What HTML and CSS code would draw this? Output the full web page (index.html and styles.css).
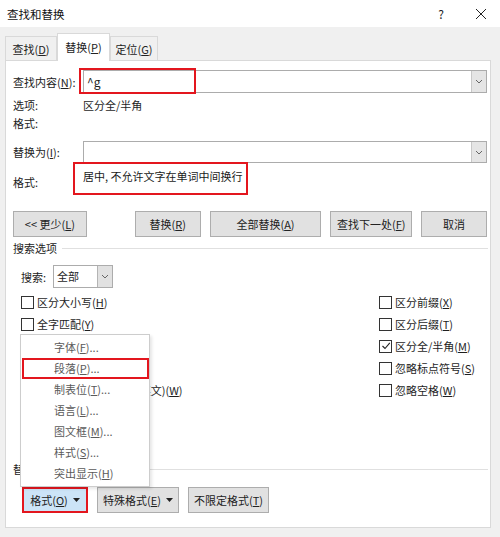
FILE: index.html
```html
<!DOCTYPE html>
<html lang="zh-CN">
<head>
<meta charset="utf-8">
<title>查找和替换</title>
<link rel="stylesheet" href="styles.css">
</head>
<body>
<div class="titlebar">
  <span class="title">查找和替换</span>
  <span class="help">?</span>
  <span class="close"><svg width="12" height="12" viewBox="0 0 12 12"><path d="M1 1L11 11M11 1L1 11" stroke="#222" stroke-width="1" fill="none"/></svg></span>
</div>
<div class="tabs">
  <div class="tab tab-find">查找(<u>D</u>)</div>
  <div class="tab tab-replace active">替换(<u>P</u>)</div>
  <div class="tab tab-goto">定位(<u>G</u>)</div>
</div>
<div class="panel">
  <div class="field find-field">
    <span class="lbl">查找内容(<u>N</u>):</span>
    <div class="combo">
      <span class="combo-text">^g</span>
      <span class="combo-btn"><svg width="8" height="5" viewBox="0 0 8 5"><path d="M1 1L4 4L7 1" stroke="#666" stroke-width="1" fill="none"/></svg></span>
    </div>
    <div class="mark mark-find"></div>
  </div>
  <div class="info first"><span class="lbl">选项:</span><span class="val">区分全/半角</span></div>
  <div class="info"><span class="lbl">格式:</span></div>
  <div class="field replace-field">
    <span class="lbl">替换为(<u>I</u>):</span>
    <div class="combo">
      <span class="combo-text"></span>
      <span class="combo-btn"><svg width="8" height="5" viewBox="0 0 8 5"><path d="M1 1L4 4L7 1" stroke="#666" stroke-width="1" fill="none"/></svg></span>
    </div>
  </div>
  <div class="format-row">
    <span class="lbl">格式:</span>
    <span class="fmt-val">居中, 不允许文字在单词中间换行</span>
    <div class="mark mark-format"></div>
  </div>
  <div class="btn-row">
    <div class="btn btn-less">&lt;&lt; 更少(<u>L</u>)</div>
    <div class="btn btn-replace">替换(<u>R</u>)</div>
    <div class="btn btn-all">全部替换(<u>A</u>)</div>
    <div class="btn btn-next">查找下一处(<u>F</u>)</div>
    <div class="btn btn-cancel">取消</div>
  </div>
  <div class="group-head">搜索选项</div>
  <div class="search-row">
    <span class="lbl">搜索:</span>
    <div class="select">
      <span class="select-text">全部</span>
      <span class="select-btn"><svg width="8" height="5" viewBox="0 0 8 5"><path d="M1 1L4 4L7 1" stroke="#666" stroke-width="1" fill="none"/></svg></span>
    </div>
  </div>
  <div class="checks">
    <div class="chk"><span class="box"></span>区分大小写(<u>H</u>)</div>
    <div class="chk"><span class="box"></span>全字匹配(<u>Y</u>)</div>
    <div class="chk covered"><span class="box"></span>使用通配符(<u>U</u>)</div>
    <div class="chk covered"><span class="box"></span>同音(英文)(<u>K</u>)</div>
    <div class="chk"><span class="box"></span>查找单词的所有形式(英文)(<u>W</u>)</div>
    <div class="chk"><span class="box"></span>区分前缀(<u>X</u>)</div>
    <div class="chk"><span class="box"></span>区分后缀(<u>T</u>)</div>
    <div class="chk"><span class="box"><svg width="10" height="10" viewBox="0 0 10 10"><path d="M1.5 5L4 7.5L8.8 1.8" stroke="#222" stroke-width="1.1" fill="none"/></svg></span>区分全/半角(<u>M</u>)</div>
    <div class="chk"><span class="box"></span>忽略标点符号(<u>S</u>)</div>
    <div class="chk"><span class="box"></span>忽略空格(<u>W</u>)</div>
  </div>
  <div class="group-head repl-head">替换</div>
  <div class="bottom-btns">
    <div class="btn btn-format marked">格式(<u>O</u>)<svg class="tri" width="7" height="4" viewBox="0 0 7 4"><path d="M0 0H7L3.5 4Z" fill="#222"/></svg></div>
    <div class="btn btn-special">特殊格式(<u>E</u>)<svg class="tri" width="7" height="4" viewBox="0 0 7 4"><path d="M0 0H7L3.5 4Z" fill="#222"/></svg></div>
    <div class="btn btn-noformat">不限定格式(<u>T</u>)</div>
  </div>
</div>
<div class="menu">
  <div class="menu-item">字体(<u>F</u>)...</div>
  <div class="menu-item marked">段落(<u>P</u>)...</div>
  <div class="menu-item">制表位(<u>T</u>)...</div>
  <div class="menu-item">语言(<u>L</u>)...</div>
  <div class="menu-item">图文框(<u>M</u>)...</div>
  <div class="menu-item">样式(<u>S</u>)...</div>
  <div class="menu-item">突出显示(<u>H</u>)</div>
</div>
</body>
</html>
```
FILE: styles.css
```css
* { box-sizing: border-box; }
html, body { margin: 0; padding: 0; }
body {
  width: 500px;
  height: 537px;
  background: #f0f0f0;
  font-family: "Noto Sans CJK SC", "Noto Sans", sans-serif;
  font-size: 11px;
  line-height: 16px;
  color: #1e1e1e;
  overflow: hidden;
  position: relative;
}
u { text-decoration: underline; text-underline-offset: 1px; text-decoration-thickness: 1px; }

.titlebar {
  height: 27px;
  background: #fff;
  display: flex;
  align-items: center;
  padding-left: 7px;
}
.title { flex: 1; font-size: 11.5px; color: #111; }
.help { width: 12px; margin-right: 28px; text-align: center; font-size: 12px; color: #222; }
.close { width: 12px; height: 12px; margin-right: 13px; display: flex; }

.tabs {
  display: flex;
  align-items: flex-end;
  height: 33px;
  padding-left: 5px;
  position: relative;
  z-index: 1;
}
.tab {
  height: 24px;
  border: 1px solid #d9d9d9;
  border-bottom: none;
  background: #f0f0f0;
  display: flex;
  align-items: center;
  justify-content: center;
  color: #222;
}
.tab-find { width: 52px; }
.tab-replace { width: 53px; }
.tab-goto { width: 48px; }
.tab.active {
  height: 28px;
  background: #fff;
  margin-bottom: -1px;
  padding-bottom: 2px;
}

.panel {
  position: relative;
  margin-left: 5px;
  width: 486px;
  height: 468px;
  background: #fff;
  border: 1px solid #d9d9d9;
  padding: 9px 3px 0 7px;
}

.lbl { color: #222; }
.field {
  display: flex;
  align-items: center;
  height: 23px;
  position: relative;
}
.field .lbl { width: 70px; flex: none; }
.replace-field { margin-top: 9px; height: 22px; }
.combo {
  flex: 1;
  height: 100%;
  border: 1px solid #acacac;
  display: flex;
  align-items: center;
  background: #fff;
}
.combo-text { flex: 1; padding-left: 3px; font-size: 12px; }
.combo-btn {
  width: 15px;
  height: 100%;
  background: #e5e5e5;
  border-left: 1px solid #c8c8c8;
  display: flex;
  align-items: center;
  justify-content: center;
}

.mark {
  position: absolute;
  border: 2px solid #e3161e;
  pointer-events: none;
}
.mark-find { left: 66px; top: -2px; width: 117px; height: 26px; }
.mark-format { left: 60px; top: -1px; width: 175px; height: 33px; }

.info { display: flex; align-items: center; height: 18px; }
.info.first { margin-top: 3px; }
.info .lbl { width: 70px; flex: none; }

.format-row {
  display: flex;
  align-items: flex-start;
  height: 48px;
  position: relative;
}
.format-row .lbl { width: 70px; flex: none; margin-top: 11px; }
.fmt-val { margin-top: 5px; color: #1a1a1a; }

.btn-row { display: flex; gap: 9px; height: 26px; }
.btn {
  height: 26px;
  background: #e1e1e1;
  border: 1px solid #adadad;
  display: flex;
  align-items: center;
  justify-content: center;
  color: #222;
  white-space: nowrap;
}
.btn-less { width: 74px; margin-right: 39px; }
.btn-replace { width: 66px; }
.btn-all { width: 112px; }
.btn-next { width: 82px; }
.btn-cancel { width: 66px; }

.group-head {
  display: flex;
  align-items: center;
  height: 16px;
  margin-top: 3px;
  color: #222;
}
.group-head::after {
  content: "";
  flex: 1;
  border-top: 1px solid #e0e0e0;
  margin-left: 5px;
  margin-right: -1px;
}
.repl-head { margin-top: 60px; }

.search-row {
  display: flex;
  align-items: center;
  height: 23px;
  margin-top: 9px;
  padding-left: 8px;
}
.search-row .lbl { width: 32px; flex: none; }
.select {
  width: 60px;
  height: 23px;
  border: 1px solid #acacac;
  display: flex;
}
.select-text { flex: 1; padding-left: 3px; line-height: 21px; }
.select-btn {
  width: 15px;
  background: #e1e1e1;
  border-left: 1px solid #b4b4b4;
  display: flex;
  align-items: center;
  justify-content: center;
}

.checks {
  display: grid;
  grid-template-columns: 358px 1fr;
  grid-template-rows: repeat(5, 22px);
  grid-auto-flow: column;
  padding-left: 8px;
  margin-top: 3px;
  white-space: nowrap;
}
.chk { display: flex; align-items: center; color: #1e1e1e; }
.chk.covered { visibility: hidden; }
.box {
  width: 13px;
  height: 13px;
  border: 1px solid #333;
  margin-right: 3px;
  display: flex;
  align-items: center;
  justify-content: center;
  flex: none;
  background: #fff;
}

.bottom-btns {
  display: flex;
  gap: 9px;
  margin-top: 10px;
  padding-left: 9px;
}
.btn-format { width: 66px; }
.btn-special { width: 82px; }
.btn-noformat { width: 81px; }
.btn.marked {
  background: #cce4f7;
  border: 2px solid #e3161e;
}
.tri { margin-left: 5px; }

.menu {
  position: absolute;
  left: 20px;
  top: 334px;
  width: 130px;
  background: #fff;
  border: 1px solid #cdcdcd;
  padding: 2px 0;
  box-shadow: 2px 2px 3px rgba(0, 0, 0, 0.10);
  z-index: 5;
}
.menu-item {
  height: 21px;
  line-height: 21px;
  padding-left: 33px;
  color: #5a5a5a;
  white-space: nowrap;
}
.menu-item.marked {
  border: 2px solid #e3161e;
  width: 127px;
  margin-left: 1px;
  padding-left: 30px;
  line-height: 17px;
}
```
